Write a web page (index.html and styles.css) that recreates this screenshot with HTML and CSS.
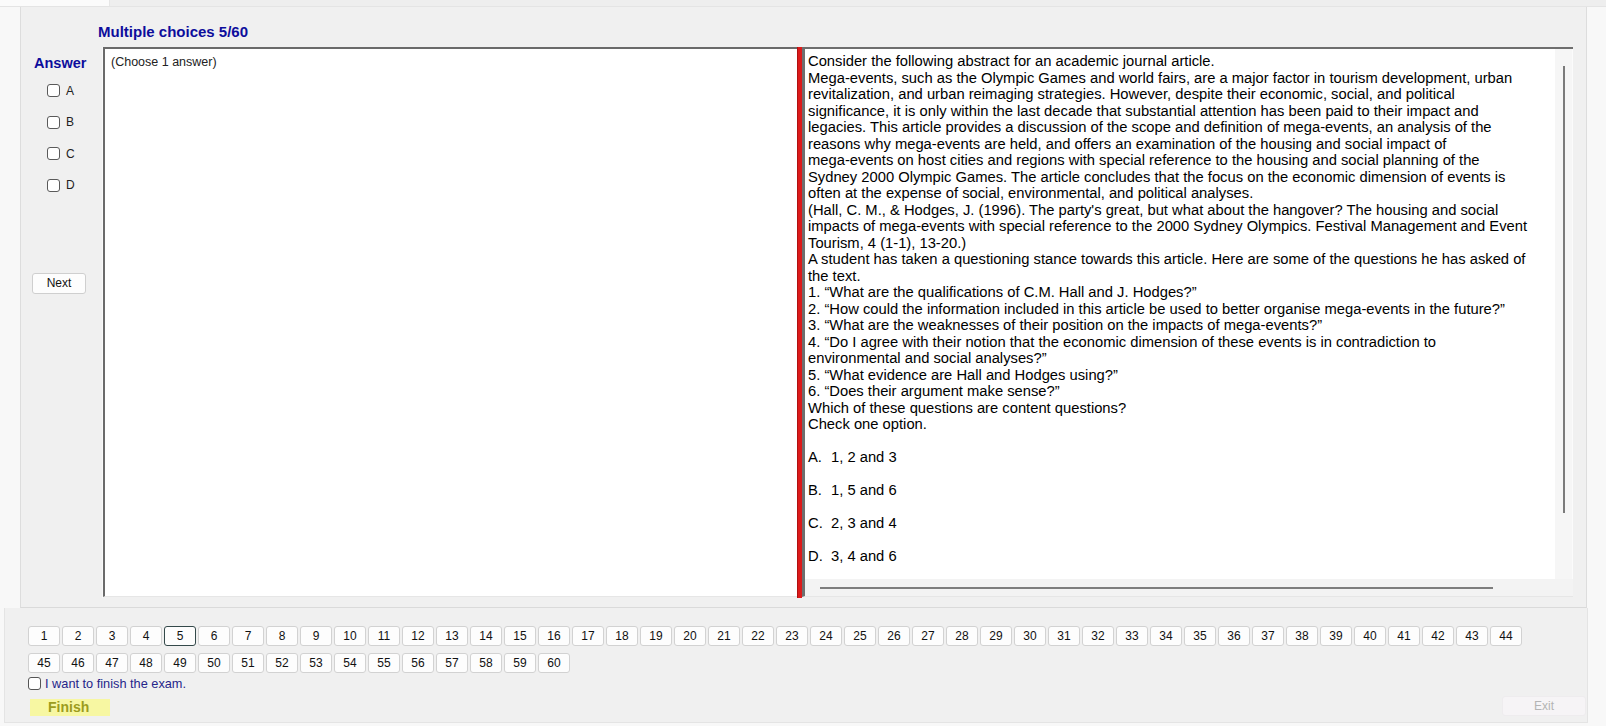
FILE: index.html
```html
<!DOCTYPE html>
<html>
<head>
<meta charset="utf-8">
<title>Exam</title>
<link rel="stylesheet" href="styles.css">
</head>
<body>
<div class="window">
  <div class="tabstrip"><div class="tab"></div></div>
  <div class="panel">
    <div class="title">Multiple choices 5/60</div>
    <div class="content">
      <div class="answers">
        <div class="answer-label">Answer</div>
        <label class="opt"><span class="cb"></span><span>A</span></label>
        <label class="opt"><span class="cb"></span><span>B</span></label>
        <label class="opt"><span class="cb"></span><span>C</span></label>
        <label class="opt"><span class="cb"></span><span>D</span></label>
        <button class="next">Next</button>
      </div>
      <div class="choose">(Choose 1 answer)</div>
      <div class="splitter"></div>
      <div class="question">
        <div class="q-main">
          <div class="q-text">
            <p>Consider the following abstract for an academic journal article.<br>
Mega-events, such as the Olympic Games and world fairs, are a major factor in tourism development, urban<br>
revitalization, and urban reimaging strategies. However, despite their economic, social, and political<br>
significance, it is only within the last decade that substantial attention has been paid to their impact and<br>
legacies. This article provides a discussion of the scope and definition of mega-events, an analysis of the<br>
reasons why mega-events are held, and offers an examination of the housing and social impact of<br>
mega-events on host cities and regions with special reference to the housing and social planning of the<br>
Sydney 2000 Olympic Games. The article concludes that the focus on the economic dimension of events is<br>
often at the expense of social, environmental, and political analyses.<br>
(Hall, C. M., &amp; Hodges, J. (1996). The party's great, but what about the hangover? The housing and social<br>
impacts of mega-events with special reference to the 2000 Sydney Olympics. Festival Management and Event<br>
Tourism, 4 (1-1), 13-20.)<br>
A student has taken a questioning stance towards this article. Here are some of the questions he has asked of<br>
the text.<br>
1. “What are the qualifications of C.M. Hall and J. Hodges?”<br>
2. “How could the information included in this article be used to better organise mega-events in the future?”<br>
3. “What are the weaknesses of their position on the impacts of mega-events?”<br>
4. “Do I agree with their notion that the economic dimension of these events is in contradiction to<br>
environmental and social analyses?”<br>
5. “What evidence are Hall and Hodges using?”<br>
6. “Does their argument make sense?”<br>
Which of these questions are content questions?<br>
Check one option.</p>
            <p class="choice"><span class="letter">A.</span>1, 2 and 3</p>
            <p class="choice"><span class="letter">B.</span>1, 5 and 6</p>
            <p class="choice"><span class="letter">C.</span>2, 3 and 4</p>
            <p class="choice"><span class="letter">D.</span>3, 4 and 6</p>
          </div>
          <div class="vscroll"><div class="vthumb"></div></div>
        </div>
        <div class="hscroll"><div class="hthumb"></div></div>
      </div>
    </div>
  </div>
  <div class="footer">
    <div class="nav">
      <button class="num">1</button><button class="num">2</button><button class="num">3</button><button class="num">4</button><button class="num current">5</button><button class="num">6</button><button class="num">7</button><button class="num">8</button><button class="num">9</button><button class="num">10</button>
      <button class="num">11</button><button class="num">12</button><button class="num">13</button><button class="num">14</button><button class="num">15</button><button class="num">16</button><button class="num">17</button><button class="num">18</button><button class="num">19</button><button class="num">20</button>
      <button class="num">21</button><button class="num">22</button><button class="num">23</button><button class="num">24</button><button class="num">25</button><button class="num">26</button><button class="num">27</button><button class="num">28</button><button class="num">29</button><button class="num">30</button>
      <button class="num">31</button><button class="num">32</button><button class="num">33</button><button class="num">34</button><button class="num">35</button><button class="num">36</button><button class="num">37</button><button class="num">38</button><button class="num">39</button><button class="num">40</button>
      <button class="num">41</button><button class="num">42</button><button class="num">43</button><button class="num">44</button><button class="num">45</button><button class="num">46</button><button class="num">47</button><button class="num">48</button><button class="num">49</button><button class="num">50</button>
      <button class="num">51</button><button class="num">52</button><button class="num">53</button><button class="num">54</button><button class="num">55</button><button class="num">56</button><button class="num">57</button><button class="num">58</button><button class="num">59</button><button class="num">60</button>
    </div>
    <label class="finish-check"><span class="cb"></span><span>I want to finish the exam.</span></label>
    <div class="actions">
      <button class="finish">Finish</button>
      <button class="exit">Exit</button>
    </div>
  </div>
</div>
</body>
</html>
```
FILE: styles.css
```css
* {
  box-sizing: border-box;
}

html, body {
  margin: 0;
  padding: 0;
}

body {
  background: #f8f8f8;
  font-family: "Liberation Sans", Arial, sans-serif;
  overflow: hidden;
}

.window {
  width: 1606px;
  height: 726px;
}

.tabstrip {
  height: 7px;
  background: #eeeeee;
  border-bottom: 1px solid #e4e4e4;
  display: flex;
}

.tab {
  width: 110px;
  height: 6px;
  background: #fbfbfb;
  border-right: 1px solid #e6e6e6;
}

.panel {
  margin-left: 20px;
  width: 1567px;
  height: 601px;
  background: #f0f0f0;
  border-left: 1px solid #dddddd;
  border-right: 1px solid #dddddd;
  border-bottom: 1px solid #dadada;
}

.title {
  padding-left: 77px;
  padding-top: 16px;
  height: 40px;
  font-size: 15px;
  line-height: 18px;
  font-weight: bold;
  color: #0d0d9c;
}

.content {
  display: flex;
  height: 551px;
}

.answers {
  width: 82px;
  display: flex;
  flex-direction: column;
  border-right: 1px solid #f8f8f8;
}

.answer-label {
  margin-top: 7px;
  padding-left: 13px;
  font-size: 14.5px;
  line-height: 18px;
  font-weight: bold;
  color: #0d0d9c;
}

.opt {
  display: flex;
  align-items: center;
  height: 13px;
  margin-left: 26px;
  margin-top: 18.5px;
  font-size: 12px;
  color: #222222;
}

.opt:first-of-type {
  margin-top: 12px;
}

.cb {
  width: 13px;
  height: 13px;
  border: 1px solid #5a5a5a;
  border-radius: 3px;
  background: #ffffff;
  margin-right: 6px;
  flex: none;
}

.next {
  margin-top: 81px;
  margin-left: 11px;
  width: 54px;
  height: 21px;
  padding: 0;
  background: #fdfdfd;
  border: 1px solid #cfcfcf;
  border-radius: 3px;
  font-family: "Liberation Sans", Arial, sans-serif;
  font-size: 12px;
  color: #111111;
}

.choose {
  width: 694px;
  background: #ffffff;
  border-top: 2px solid #6a6a6a;
  border-left: 2px solid #6a6a6a;
  border-bottom: 1px solid #e6e6e6;
  padding: 6px 0 0 6px;
  font-size: 12.5px;
  line-height: 14px;
  color: #222222;
  height: 550px;
}

.splitter {
  width: 5px;
  background: #dc1a1a;
  border-left: 1px solid #b01010;
}

.question {
  width: 771px;
  display: flex;
  flex-direction: column;
  border-top: 2px solid #6e6e6e;
  border-left: 3px solid #6e6e6e;
  border-bottom: 1px solid #e6e6e6;
  height: 550px;
}

.q-main {
  flex: 1;
  display: flex;
  min-height: 0;
}

.q-text {
  flex: 1;
  background: #ffffff;
  padding: 4px 0 0 3px;
  font-size: 14.75px;
  line-height: 16.5px;
  color: #000000;
  white-space: nowrap;
  overflow: hidden;
}

.q-text p {
  margin: 0;
}

.q-text .choice {
  margin-top: 16.5px;
}

.letter {
  display: inline-block;
  width: 23px;
}

.vscroll {
  width: 18px;
  background: #f6f6f6;
  border-right: 1px solid #fbfbfb;
}

.vthumb {
  margin-top: 17px;
  margin-left: 8px;
  width: 2px;
  height: 447px;
  background: #7b7b7b;
}

.hscroll {
  height: 17px;
  background: #f3f3f3;
  padding-top: 8px;
}

.hthumb {
  margin-left: 15px;
  width: 673px;
  height: 2px;
  background: #7d7d7d;
}

.footer {
  margin-left: 4px;
  width: 1584px;
  height: 115px;
  background: #f0f0f0;
  border-left: 1px solid #e4e4e4;
  border-right: 1px solid #e4e4e4;
  border-bottom: 1px solid #e4e4e4;
  padding: 18px 0 0 23px;
}

.nav {
  width: 1494px;
  display: flex;
  flex-wrap: wrap;
  gap: 7px 2px;
}

.num {
  width: 32px;
  height: 20px;
  padding: 0;
  background: #fdfdfd;
  border: 1px solid #d2d2d2;
  border-radius: 3px;
  font-family: "Liberation Sans", Arial, sans-serif;
  font-size: 12px;
  color: #111111;
}

.num.current {
  border-color: #34494a;
}

.finish-check {
  display: flex;
  align-items: center;
  margin-top: 4px;
  height: 13px;
  font-size: 12.75px;
  color: #25258a;
}

.finish-check .cb {
  margin-right: 4px;
  border-color: #555555;
}

.actions {
  display: flex;
  justify-content: space-between;
  align-items: flex-end;
  margin-top: 6px;
  height: 20px;
}

.finish {
  margin-left: 2px;
  width: 80px;
  height: 17px;
  padding: 0 0 0 18px;
  text-align: left;
  background: #f7f7a2;
  border: none;
  font-family: "Liberation Sans", Arial, sans-serif;
  font-size: 14px;
  font-weight: bold;
  color: #9c9c1e;
  line-height: 17px;
}

.exit {
  margin-right: 1px;
  width: 84px;
  height: 20px;
  padding: 0;
  background: #f6f4f6;
  border: 1px solid #eeecee;
  border-radius: 3px;
  font-family: "Liberation Sans", Arial, sans-serif;
  font-size: 12px;
  color: #b4b4b4;
}
```
